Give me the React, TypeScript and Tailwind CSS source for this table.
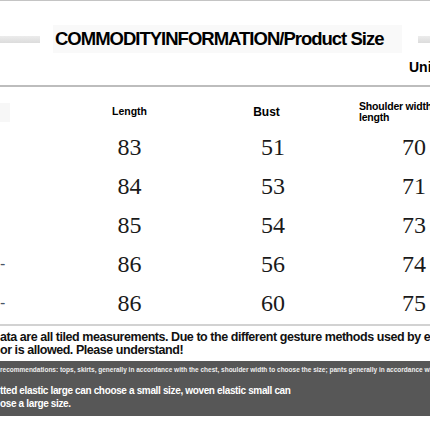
import React from "react";

const rows = [
  { label: "", length: 83, bust: 51, shoulder: 70 },
  { label: "", length: 84, bust: 53, shoulder: 71 },
  { label: "", length: 85, bust: 54, shoulder: 73 },
  { label: "-", length: 86, bust: 56, shoulder: 74 },
  { label: "-", length: 86, bust: 60, shoulder: 75 },
];

function SizeRow({ row }) {
  return (
    <div className="flex items-center h-[39px] whitespace-nowrap">
      <div className="w-[10px] shrink-0 text-left text-[16px] leading-none text-gray-600 font-['Liberation_Sans',sans-serif]">{row.label}</div>
      <div className="w-[239px] shrink-0 text-center">{row.length}</div>
      <div className="w-[48px] shrink-0 text-center">{row.bust}</div>
      <div className="w-[234px] shrink-0 text-center">{row.shoulder}</div>
    </div>
  );
}

export default function App() {
  return (
    <div className="w-[430px] h-[430px] overflow-hidden bg-white relative font-['Liberation_Sans',sans-serif] text-black">
      <div className="h-[1px] bg-[#c4c4c4]" />

      {/* title */}
      <div className="flex items-center mt-[24px] h-[28px]">
        <div className="w-[40px] shrink-0 h-[7px] bg-gradient-to-b from-[#ececec] to-[#dcdcdc]" />
        <div className="ml-[13px] w-[349px] shrink-0 h-[28px] bg-[#f9f9f9] flex items-center pl-[2px]">
          <span className="text-[18.5px] font-bold tracking-[-1px] whitespace-nowrap">COMMODITYINFORMATION/Product Size</span>
        </div>
        <div className="ml-auto w-[12px] shrink-0 h-[7px] bg-gradient-to-b from-[#ececec] to-[#dcdcdc]" />
      </div>

      <div className="flex justify-end mt-[6px] h-[16px] overflow-hidden">
        <span className="w-[21px] text-[14px] font-bold leading-[16px] whitespace-nowrap overflow-hidden">Unit</span>
      </div>

      <div className="mt-[10px] h-[2px] bg-[#bdbdbd]" />

      {/* header */}
      <div className="flex items-center h-[30px] mt-[10px] whitespace-nowrap">
        <div className="w-[10px] shrink-0 h-[19px] bg-[#f7f7f7]" />
        <div className="w-[239px] shrink-0 text-center text-[10.5px] font-bold">Length</div>
        <div className="w-[35px] shrink-0 text-center text-[12px] font-bold">Bust</div>
        <div className="ml-[75px] shrink-0 text-[10.5px] font-bold leading-[11px] tracking-[-0.2px]">
          Shoulder width
          <br />
          length
        </div>
      </div>

      {/* data */}
      <div className="text-[24px] leading-none font-['Liberation_Serif',serif] text-[#1a1a1a]">
        {rows.map((r, i) => (
          <SizeRow key={i} row={r} />
        ))}
      </div>

      <div className="mt-[2px] h-[2px] bg-[#d2d2d2]" />

      {/* note */}
      <div className="mt-[5px] text-[12.5px] font-bold leading-[13px] tracking-[-0.45px] whitespace-nowrap text-[#111]">
        <div>ata are all tiled measurements. Due to the different gesture methods used by ea</div>
        <div>or is allowed. Please understand!</div>
      </div>

      <div className="mt-[4px] h-[55px] bg-[#575757] text-white whitespace-nowrap">
        <div className="pt-[5px] text-[6.5px] font-bold leading-[8px] text-[#eeeeee]">
          recommendations: tops, skirts, generally in accordance with the chest, shoulder width to choose the size; pants generally in accordance with the waist
        </div>
        <div className="mt-[10px] text-[10px] font-bold leading-[13px] tracking-[-0.35px]">
          <div>tted elastic large can choose a small size, woven elastic small can</div>
          <div>ose a large size.</div>
        </div>
      </div>
    </div>
  );
}
